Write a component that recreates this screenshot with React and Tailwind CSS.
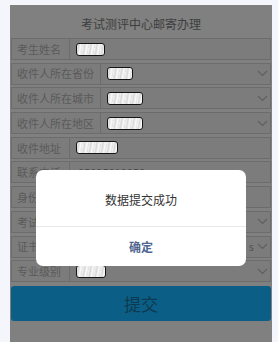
import React from "react";

const font = { fontFamily: '"Noto Sans CJK SC", "Noto Sans", sans-serif' };

function Thumb({ w }) {
  return (
    <div
      className="h-[13px] shrink-0 rounded-[3px] border-[1.5px] border-[#151515] bg-[#ececec]"
      style={{
        width: w,
        backgroundImage:
          "repeating-linear-gradient(100deg,#f4f4f4 0px,#d8d8d8 2px,#fafafa 4px,#e0e0e0 6px)",
      }}
    />
  );
}

function Chevron() {
  return (
    <svg width="11" height="7" viewBox="0 0 11 7" className="shrink-0">
      <path d="M1 1 L5.5 5.5 L10 1" fill="none" stroke="#606060" strokeWidth="1.2" />
    </svg>
  );
}

function Row({ label, labelW, thumb, thumbW, select, value, extra }) {
  return (
    <div className="flex h-[22px] items-stretch border border-[#6c6c6c] bg-[#7c7c7c]">
      <div
        className="flex shrink-0 items-center border-r border-[#6c6c6c] pl-[5px] text-[11px] text-[#5a5a5a]"
        style={{ width: labelW }}
      >
        {label}
      </div>
      <div className="flex flex-1 items-center pl-[6px] pr-[2px]">
        {thumb && <Thumb w={thumbW} />}
        {value && <span className="pl-[2px] text-[11px] text-[#4a4a4a]">{value}</span>}
        <div className="flex-1" />
        {extra && <span className="mr-[3px] text-[11px] text-[#555]">{extra}</span>}
        {select && <Chevron />}
      </div>
    </div>
  );
}

export default function App() {
  return (
    <div
      className="h-[342px] w-[278px] overflow-hidden bg-[#f4f6fb] pt-[5px] pl-[10px] pr-[6px]"
      style={font}
    >
      <div className="relative h-[337px] bg-[#7f807f]">
        <div className="flex h-[33px] items-center justify-center pt-[5px] text-[12px] text-[#3e3e3e]">
          考试测评中心邮寄办理
        </div>
        <div className="flex flex-col gap-[2.7px] px-[1px]">
          <Row label="考生姓名" labelW={58} thumb thumbW={29} />
          <Row label="收件人所在省份" labelW={89} thumb thumbW={26} select />
          <Row label="收件人所在城市" labelW={89} thumb thumbW={36} select />
          <Row label="收件人所在地区" labelW={89} thumb thumbW={36} select />
          <Row label="收件地址" labelW={58} thumb thumbW={42} />
          <Row label="联系电话" labelW={58} value="05925819050" />
          <Row label="身份证号" labelW={58} />
          <Row label="考试名称" labelW={58} select />
          <Row label="证书类型" labelW={58} select extra="s" />
          <Row label="专业级别" labelW={58} thumb thumbW={30} select />
        </div>
        <div className="mx-[1px] mt-[4px] flex h-[35px] items-center justify-center rounded-[3px] bg-[#0b5f86] text-[17px] text-[#0d3a52]">
          提交
        </div>
        <div className="absolute left-[26px] top-[165px] w-[210px] overflow-hidden rounded-[7px] bg-white">
          <div className="flex h-[56px] items-center justify-center pt-[4px] text-[12px] text-[#333]">
            数据提交成功
          </div>
          <div className="h-px bg-[#e8e8e8]" />
          <div className="flex h-[39px] items-center justify-center text-[12px] font-bold text-[#4f6690]">
            确定
          </div>
        </div>
      </div>
    </div>
  );
}
